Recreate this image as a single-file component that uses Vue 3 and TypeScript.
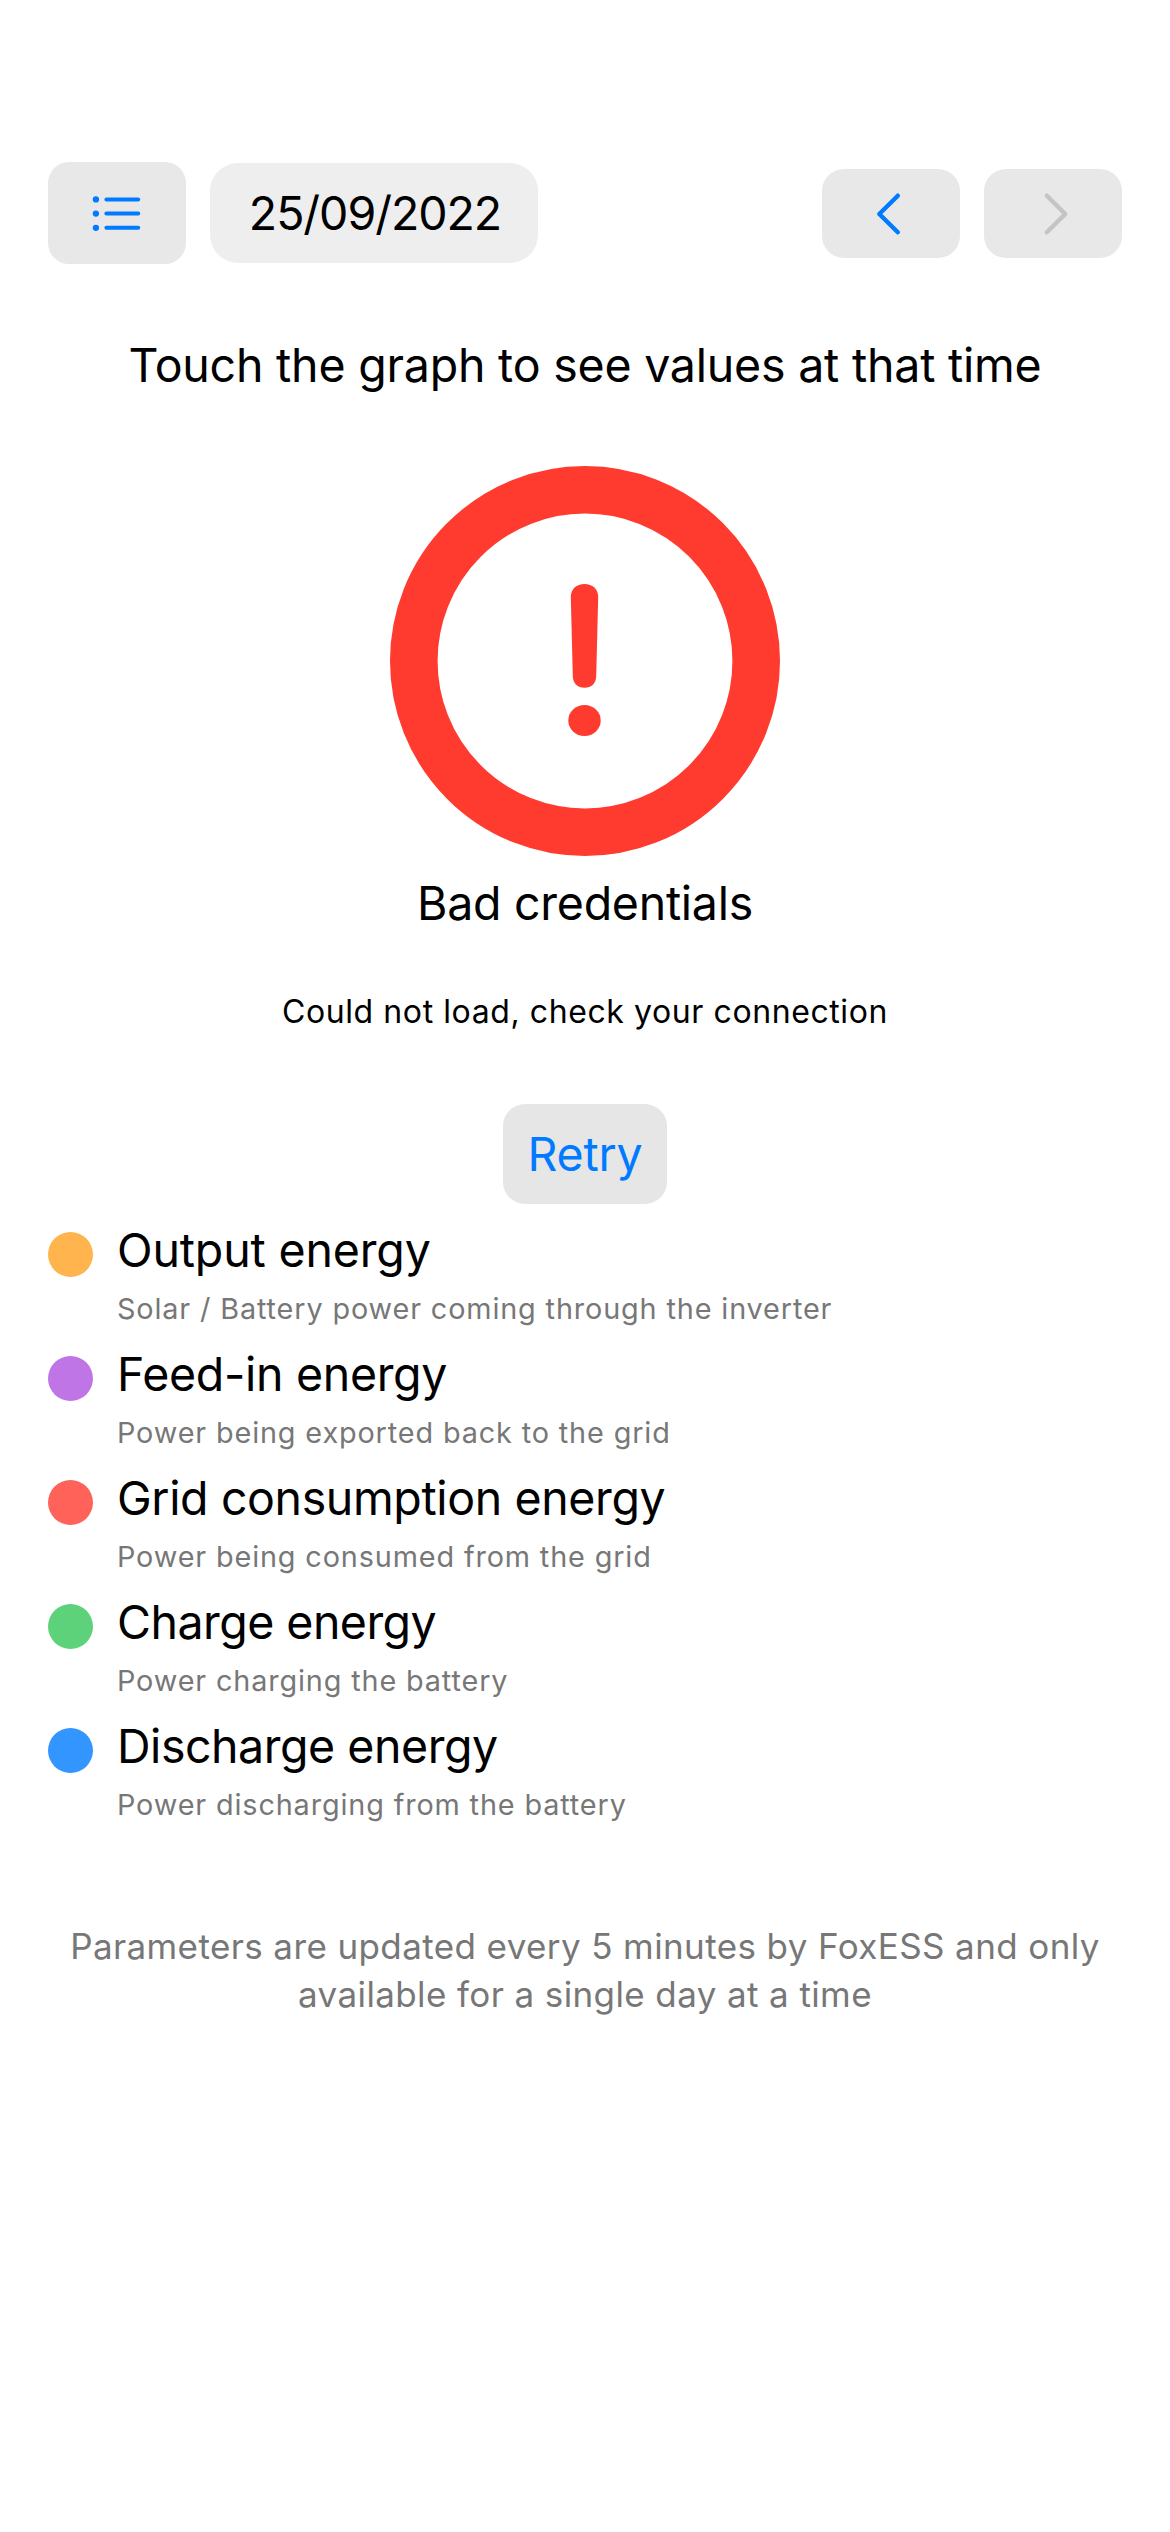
<script setup lang="ts">
interface LegendItem {
  name: string
  caption: string
  color: string
  tracking: number
}

const legend: LegendItem[] = [
  { name: 'Output energy', caption: 'Solar / Battery power coming through the inverter', color: '#ffb44d', tracking: -0.15 },
  { name: 'Feed-in energy', caption: 'Power being exported back to the grid', color: '#bf75e6', tracking: -0.32 },
  { name: 'Grid consumption energy', caption: 'Power being consumed from the grid', color: '#ff6259', tracking: -0.37 },
  { name: 'Charge energy', caption: 'Power charging the battery', color: '#5dd27a', tracking: -0.53 },
  { name: 'Discharge energy', caption: 'Power discharging from the battery', color: '#3395ff', tracking: -0.46 },
]
</script>

<template>
  <main class="screen">
    <header class="toolbar">
      <button class="btn list-btn" type="button" aria-label="Parameters">
        <svg width="52" height="40" viewBox="0 0 52 40">
          <g fill="#007aff">
            <circle cx="4.9" cy="6.4" r="3.15" />
            <circle cx="4.9" cy="20.6" r="3.15" />
            <circle cx="4.9" cy="34.8" r="3.15" />
            <rect x="13.4" y="4.4" width="35.8" height="4" rx="2" />
            <rect x="13.4" y="18.6" width="35.8" height="4" rx="2" />
            <rect x="13.4" y="32.8" width="35.8" height="4" rx="2" />
          </g>
        </svg>
      </button>
      <button class="btn date-btn" type="button">25/09/2022</button>
      <div class="spacer"></div>
      <button class="btn nav-btn" type="button" aria-label="Previous day">
        <svg width="50" height="50" viewBox="0 0 50 50">
          <path d="M31.8 6.7 L13.3 25 L31.8 43.3" fill="none" stroke="#007aff" stroke-width="4.4" stroke-linecap="round" stroke-linejoin="round" />
        </svg>
      </button>
      <button class="btn nav-btn" type="button" aria-label="Next day" disabled>
        <svg width="50" height="50" viewBox="0 0 50 50">
          <path d="M18.8 6.7 L37.3 25 L18.8 43.3" fill="none" stroke="#c4c4c6" stroke-width="4.4" stroke-linecap="round" stroke-linejoin="round" />
        </svg>
      </button>
    </header>

    <p class="hint">Touch the graph to see values at that time</p>

    <section class="error">
      <svg class="alert" width="390" height="390" viewBox="0 0 390 390">
        <circle cx="195" cy="195" r="171.2" fill="none" stroke="#ff3b30" stroke-width="47.6" />
        <path
          d="M194.5 118 C202.5 118 208.3 123.2 208.2 131 L206.2 210 C206 217.6 201.5 221.8 194.5 221.8 C187.5 221.8 183 217.6 182.8 210 L180.8 131 C180.7 123.2 186.5 118 194.5 118 Z"
          fill="#ff3b30"
        />
        <ellipse cx="194.5" cy="254.5" rx="16.2" ry="15.5" fill="#ff3b30" />
      </svg>
      <p class="error-title">Bad credentials</p>
      <p class="error-detail">Could not load, check your connection</p>
      <button class="btn retry" type="button">Retry</button>
    </section>

    <ul class="legend">
      <li v-for="item in legend" :key="item.name" class="legend-row">
        <span class="dot" :style="{ background: item.color }"></span>
        <div>
          <p class="name" :style="{ letterSpacing: item.tracking + 'px' }">{{ item.name }}</p>
          <p class="caption">{{ item.caption }}</p>
        </div>
      </li>
    </ul>

    <p class="footnote">Parameters are updated every 5 minutes by FoxESS and only available for a single day at a time</p>
  </main>
</template>

<style>
body {
  margin: 0;
  background: #fff;
}
</style>

<style scoped>
.screen {
  box-sizing: border-box;
  width: 1170px;
  height: 2532px;
  padding: 162px 48px 0;
  background: #fff;
  color: #000;
  font-family: Inter, "Liberation Sans", sans-serif;
  font-size: 46.5px;
  line-height: 56px;
}
p,
ul {
  margin: 0;
  padding: 0;
}
.toolbar {
  display: flex;
  align-items: center;
  gap: 24px;
  height: 102px;
}
.spacer {
  flex: 1;
}
.btn {
  display: flex;
  align-items: center;
  justify-content: center;
  box-sizing: border-box;
  flex: none;
  margin: 0;
  padding: 0;
  border: 0;
  font: inherit;
  color: #007aff;
}
.list-btn {
  width: 138px;
  height: 102px;
  border-radius: 21px;
  background: #e8e8e8;
}
.date-btn {
  width: 328px;
  height: 100px;
  padding-left: 2px;
  border-radius: 28px;
  background: #eee;
  color: #000;
  letter-spacing: -1.04px;
}
.nav-btn {
  width: 138px;
  height: 89px;
  margin-top: 1px;
  border-radius: 22px;
  background: #e8e8e8;
}
.hint {
  margin-top: 73px;
  text-align: center;
  letter-spacing: -0.21px;
}
.error {
  display: flex;
  flex-direction: column;
  align-items: center;
  margin-top: 73px;
}
.alert {
  display: block;
}
.error-title {
  margin-top: 19px;
  letter-spacing: -0.26px;
}
.error-detail {
  margin-top: 61px;
  font-size: 32px;
  line-height: 40px;
  letter-spacing: 0.59px;
}
.retry {
  width: 164px;
  height: 100px;
  margin-top: 72px;
  border-radius: 22px;
  background: #e6e6e6;
  letter-spacing: -0.18px;
}
.legend {
  display: flex;
  flex-direction: column;
  gap: 20px;
  margin-top: 18px;
  list-style: none;
}
.legend-row {
  display: flex;
  gap: 24px;
  height: 104px;
}
.dot {
  flex: none;
  width: 45px;
  height: 45px;
  margin-top: 10px;
  border-radius: 50%;
}
.caption {
  margin-top: 13px;
  font-size: 28.8px;
  line-height: 36px;
  letter-spacing: 0.87px;
  color: #777;
}
.footnote {
  margin-top: 100px;
  font-size: 35px;
  line-height: 48px;
  letter-spacing: 0.39px;
  text-align: center;
  color: #777;
}
</style>
